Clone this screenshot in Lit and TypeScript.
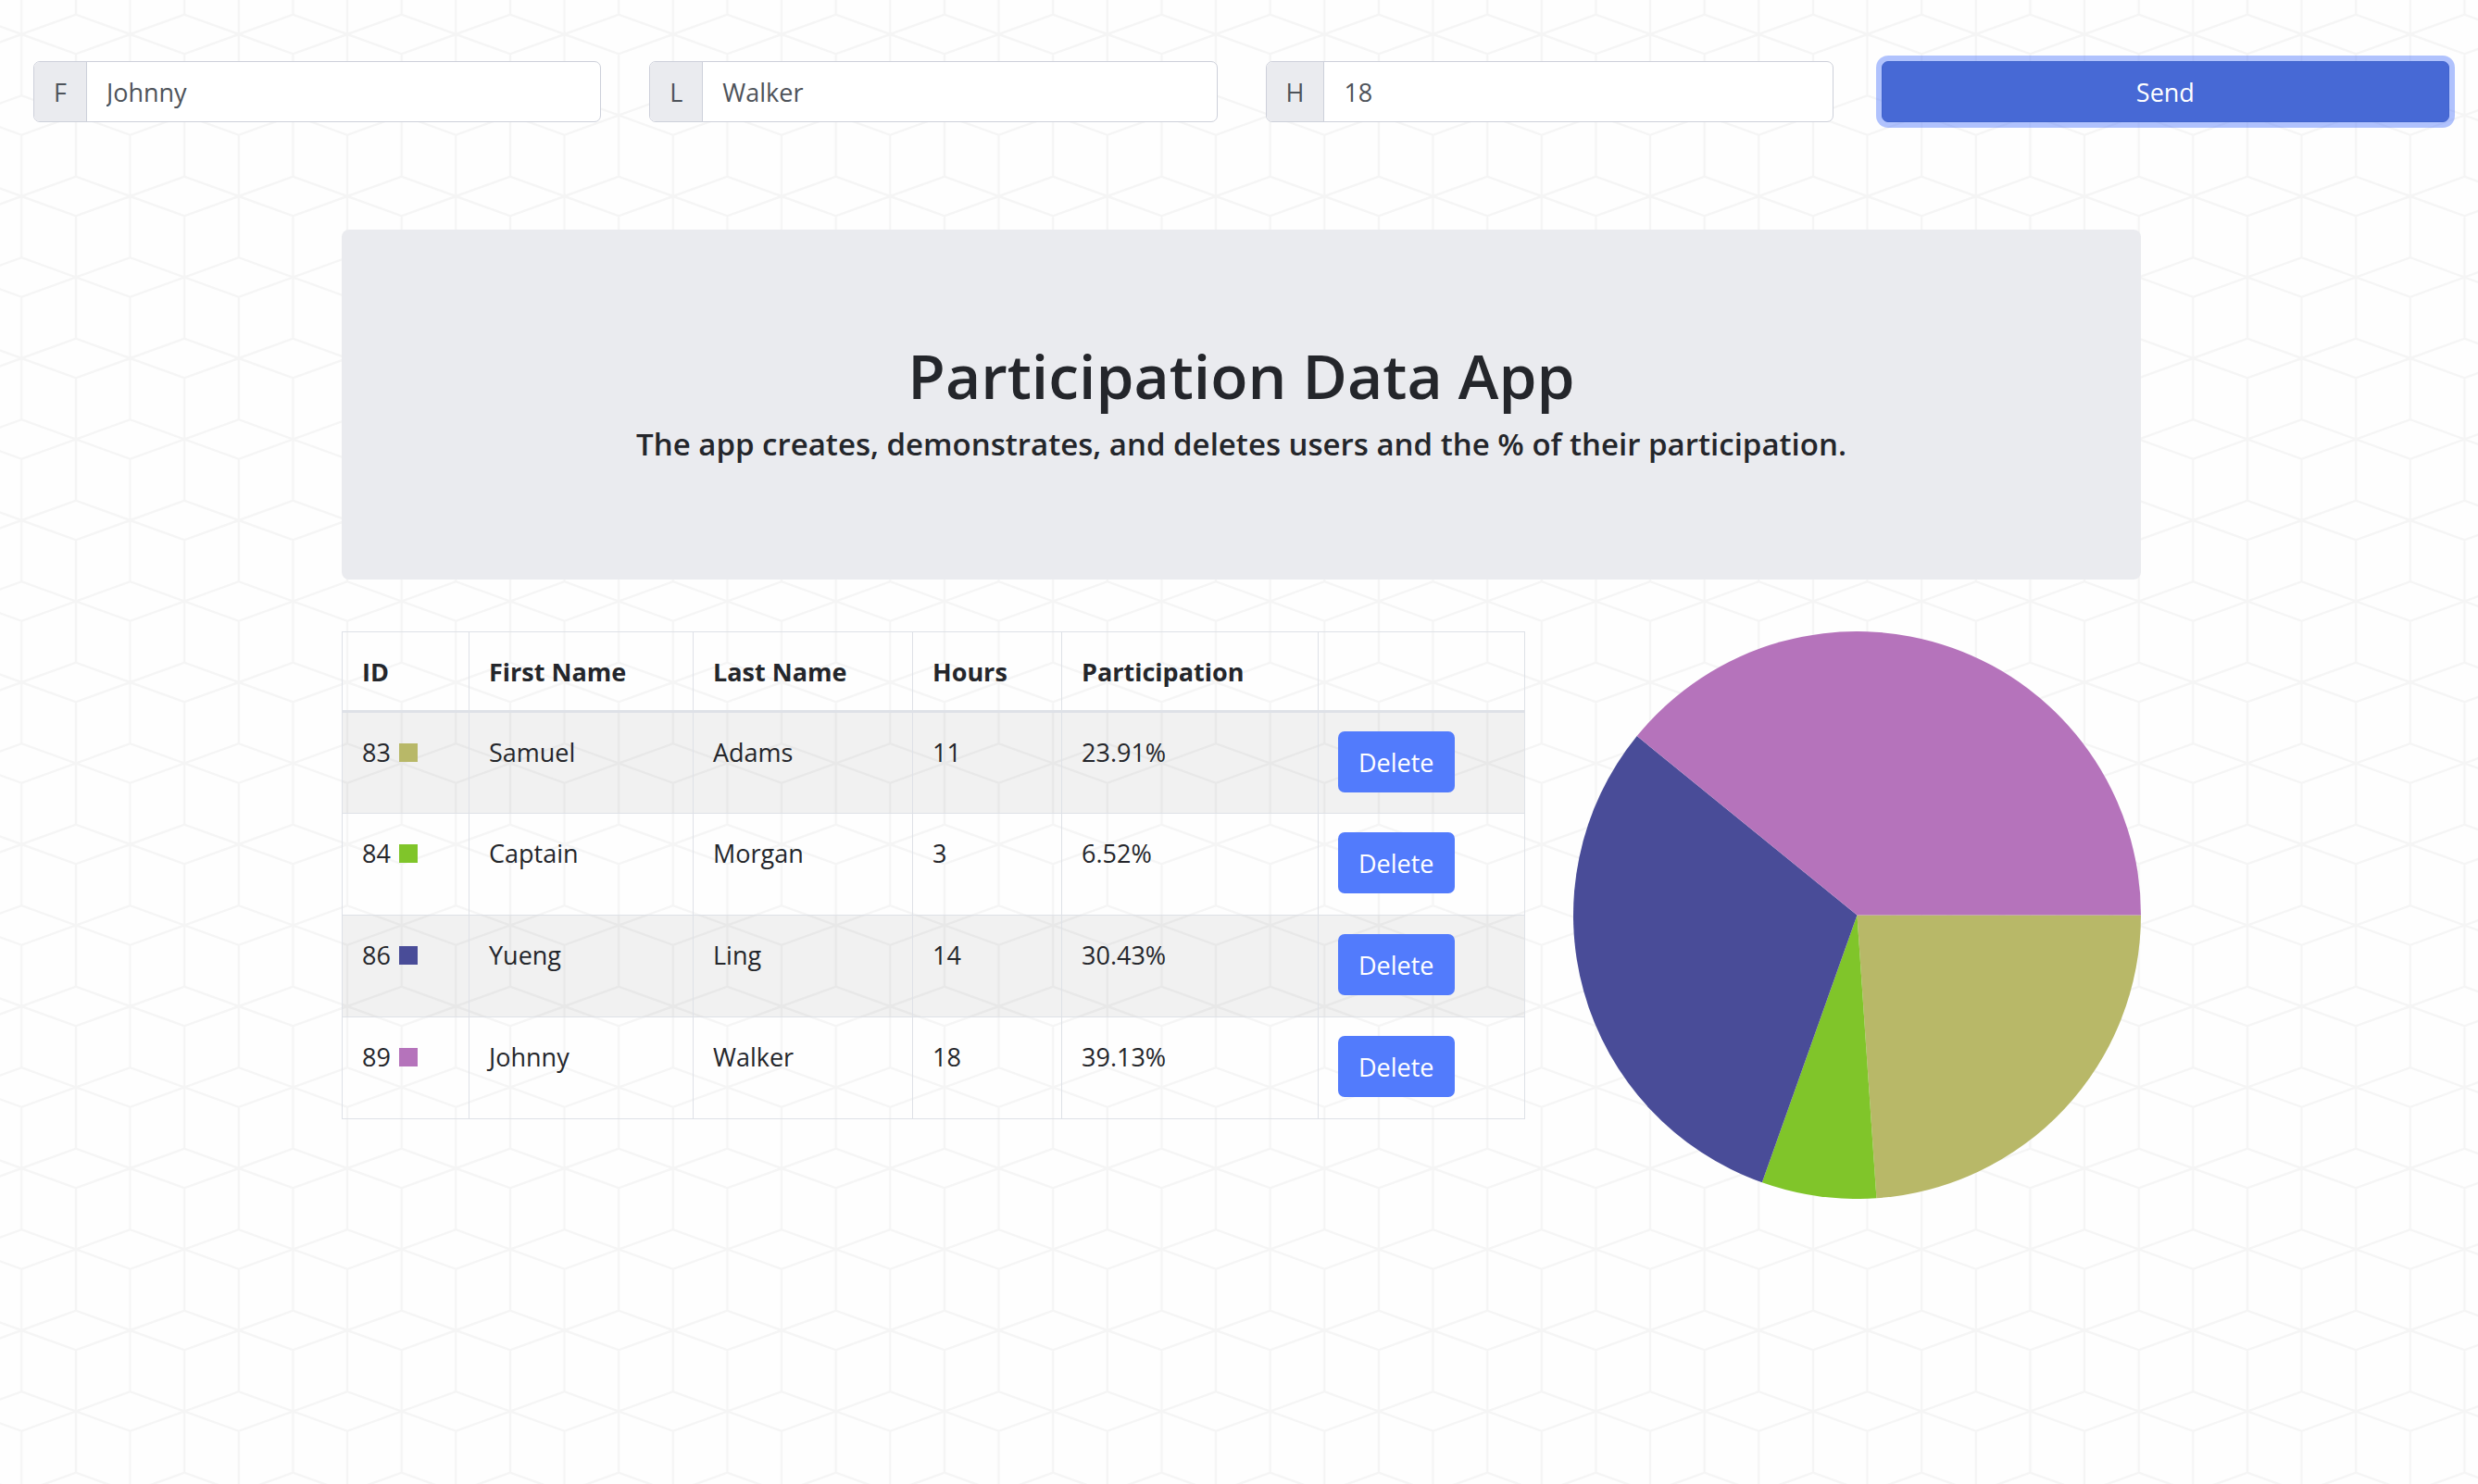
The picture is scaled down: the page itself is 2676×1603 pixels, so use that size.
import { LitElement, html, svg, css } from "lit";
import { customElement, state } from "lit/decorators.js";

interface Participant {
  id: number;
  first: string;
  last: string;
  hours: number;
  color: string;
}

/** Solid pie chart; slices run clockwise from three o'clock. */
@customElement("pie-chart")
export class PieChart extends LitElement {
  static properties = { people: { attribute: false } };
  declare people: Participant[];

  static styles = css`
    :host {
      display: block;
    }
    .pie {
      display: block;
      width: 100%;
      height: auto;
    }
  `;

  constructor() {
    super();
    this.people = [];
  }

  render() {
    const total = this.people.reduce((sum, p) => sum + p.hours, 0);
    let angle = 0;
    const slices = this.people.map((p) => {
      const sweep = (p.hours / total) * Math.PI * 2;
      const x1 = 100 * Math.cos(angle);
      const y1 = 100 * Math.sin(angle);
      angle += sweep;
      const x2 = 100 * Math.cos(angle);
      const y2 = 100 * Math.sin(angle);
      const large = sweep > Math.PI ? 1 : 0;
      return svg`<path fill=${p.color} d="M0 0L${x1} ${y1}A100 100 0 ${large} 1 ${x2} ${y2}Z"></path>`;
    });
    return html`<svg class="pie" viewBox="-100 -100 200 200" role="img" aria-label="Participation">${slices}</svg>`;
  }
}

@customElement("app-root")
export class AppRoot extends LitElement {
  @state() private people: Participant[] = [
    { id: 83, first: "Samuel", last: "Adams", hours: 11, color: "#b8b868" },
    { id: 84, first: "Captain", last: "Morgan", hours: 3, color: "#80c52a" },
    { id: 86, first: "Yueng", last: "Ling", hours: 14, color: "#494c98" },
    { id: 89, first: "Johnny", last: "Walker", hours: 18, color: "#b573bb" },
  ];

  static styles = css`
    :host {
      display: block;
      position: relative;
      box-sizing: border-box;
      min-height: 100vh;
      padding: 66px 0 0 5px;
      overflow: hidden;
      background: #fefefe;
      color: #24262b;
      font-family: "Open Sans", "Noto Sans", sans-serif;
      font-size: 27px;
      line-height: 46px;
    }
    *,
    *::before,
    *::after {
      box-sizing: border-box;
    }
    .backdrop {
      position: absolute;
      inset: 0;
      width: 100%;
      height: 100%;
      z-index: 0;
    }
    .cube {
      fill: none;
      stroke: #f5f5f5;
      stroke-width: 2.4;
    }
    .entry,
    .content {
      position: relative;
      z-index: 1;
    }
    .entry {
      display: grid;
      grid-template-columns: repeat(4, 1fr);
      gap: 52px;
      padding: 0 31px;
    }
    .field {
      display: flex;
      height: 66px;
      border: 1px solid #cdd0da;
      border-radius: 7px;
      overflow: hidden;
      background: #fff;
      color: #4e535a;
    }
    .tag {
      display: flex;
      align-items: center;
      padding: 2px 21px 0;
      border-right: 1px solid #cdd0da;
      background: #eaebef;
    }
    .box {
      flex: 1;
      min-width: 0;
      padding: 2px 21px 0;
      border: 0;
      outline: 0;
      background: transparent;
      color: inherit;
      font: inherit;
    }
    .btn {
      height: 66px;
      padding: 2px 22px 0;
      border: 0;
      border-radius: 7px;
      background: #527bfc;
      color: #fff;
      font: inherit;
      cursor: pointer;
    }
    .send {
      border: 1px solid #4064cc;
      background: #4769d5;
      box-shadow: 0 0 0 6px #527bfc73;
    }
    .content {
      width: 73%;
      max-width: 1943px;
      margin: 116px auto 0;
    }
    .hero {
      padding: 115px 56px 125px;
      border-radius: 8px;
      background: #eaebef;
      text-align: center;
    }
    .title,
    .lead {
      margin: 0;
      font-weight: 600;
    }
    .title {
      margin-bottom: 12px;
      font-size: 66px;
      line-height: 84px;
    }
    .lead {
      font-size: 33px;
      line-height: 42px;
    }
    .results {
      display: grid;
      grid-template-columns: repeat(12, 1fr);
      column-gap: 52px;
      align-items: start;
      margin-top: 56px;
    }
    .table {
      grid-column: span 8;
      width: 100%;
      border-collapse: collapse;
      table-layout: fixed;
    }
    .chart {
      grid-column: span 4;
    }
    .c-id {
      width: 137px;
    }
    .c-first {
      width: 242px;
    }
    .c-last {
      width: 237px;
    }
    .c-hours {
      width: 161px;
    }
    .c-part {
      width: 277px;
    }
    .c-act {
      width: 223px;
    }
    .cell {
      height: 110px;
      padding: 20px 21px;
      border: 1px solid #dee1e7;
      text-align: left;
      vertical-align: top;
    }
    .head {
      height: 86px;
      padding: 21px 21px 18px;
      border-bottom: 3px solid #dee1e7;
      font-weight: 700;
      line-height: 44px;
    }
    .row:nth-child(odd) {
      background: rgba(0, 0, 0, 0.05);
    }
    .swatch {
      display: inline-block;
      width: 20px;
      height: 20px;
      margin-left: 9px;
    }
    .cell .btn {
      display: block;
    }
  `;

  private field(id: string, tag: string, label: string, value: string) {
    return html`<div class="field">
      <label class="tag" for=${id} title=${label}>${tag}</label>
      <input class="box" id=${id} type="text" .value=${value} />
    </div>`;
  }

  private remove(id: number) {
    this.people = this.people.filter((p) => p.id !== id);
  }

  render() {
    const total = this.people.reduce((sum, p) => sum + p.hours, 0);
    return html`
      <svg class="backdrop" aria-hidden="true">
        <defs>
          <pattern id="cubes" x="-35.3" y="37" width="117.25" height="175" patternUnits="userSpaceOnUse">
            <path
              class="cube"
              d="M-5 19.5L0 21.3L58.6 0L117.25 21.3L122 19.5M-5 155.5L0 153.7L58.6 175L117.25 153.7L122 155.5M58.6 0L0 -21.3M58.6 0L117.25 -21.3M58.6 175L0 196.3M58.6 175L117.25 196.3M-5 85.7L0 87.5L58.6 66.2L117.25 87.5L122 85.7M-5 89.3L0 87.5L58.6 108.8L117.25 87.5L122 89.3M58.6 -5V66.2M58.6 108.8V180M0 21.3V153.7M117.25 21.3V153.7"
            ></path>
          </pattern>
        </defs>
        <rect width="100%" height="100%" fill="url(#cubes)"></rect>
      </svg>
      <form class="entry" @submit=${(e: Event) => e.preventDefault()}>
        ${this.field("first", "F", "First name", "Johnny")}
        ${this.field("last", "L", "Last name", "Walker")}
        ${this.field("hours", "H", "Hours", "18")}
        <button class="btn send" type="submit">Send</button>
      </form>
      <main class="content">
        <header class="hero">
          <h1 class="title">Participation Data App</h1>
          <h2 class="lead">The app creates, demonstrates, and deletes users and the % of their participation.</h2>
        </header>
        <section class="results">
          <table class="table">
            <colgroup>
              <col class="c-id" />
              <col class="c-first" />
              <col class="c-last" />
              <col class="c-hours" />
              <col class="c-part" />
              <col class="c-act" />
            </colgroup>
            <thead>
              <tr>
                <th class="cell head" scope="col">ID</th>
                <th class="cell head" scope="col">First Name</th>
                <th class="cell head" scope="col">Last Name</th>
                <th class="cell head" scope="col">Hours</th>
                <th class="cell head" scope="col">Participation</th>
                <td class="cell head"></td>
              </tr>
            </thead>
            <tbody>
              ${this.people.map(
                (p) => html`<tr class="row">
                  <td class="cell">${p.id}<span class="swatch" style="background:${p.color}"></span></td>
                  <td class="cell">${p.first}</td>
                  <td class="cell">${p.last}</td>
                  <td class="cell">${p.hours}</td>
                  <td class="cell">${((p.hours / total) * 100).toFixed(2)}%</td>
                  <td class="cell">
                    <button class="btn" type="button" @click=${() => this.remove(p.id)}>Delete</button>
                  </td>
                </tr>`
              )}
            </tbody>
          </table>
          <pie-chart class="chart" .people=${this.people}></pie-chart>
        </section>
      </main>
    `;
  }
}
